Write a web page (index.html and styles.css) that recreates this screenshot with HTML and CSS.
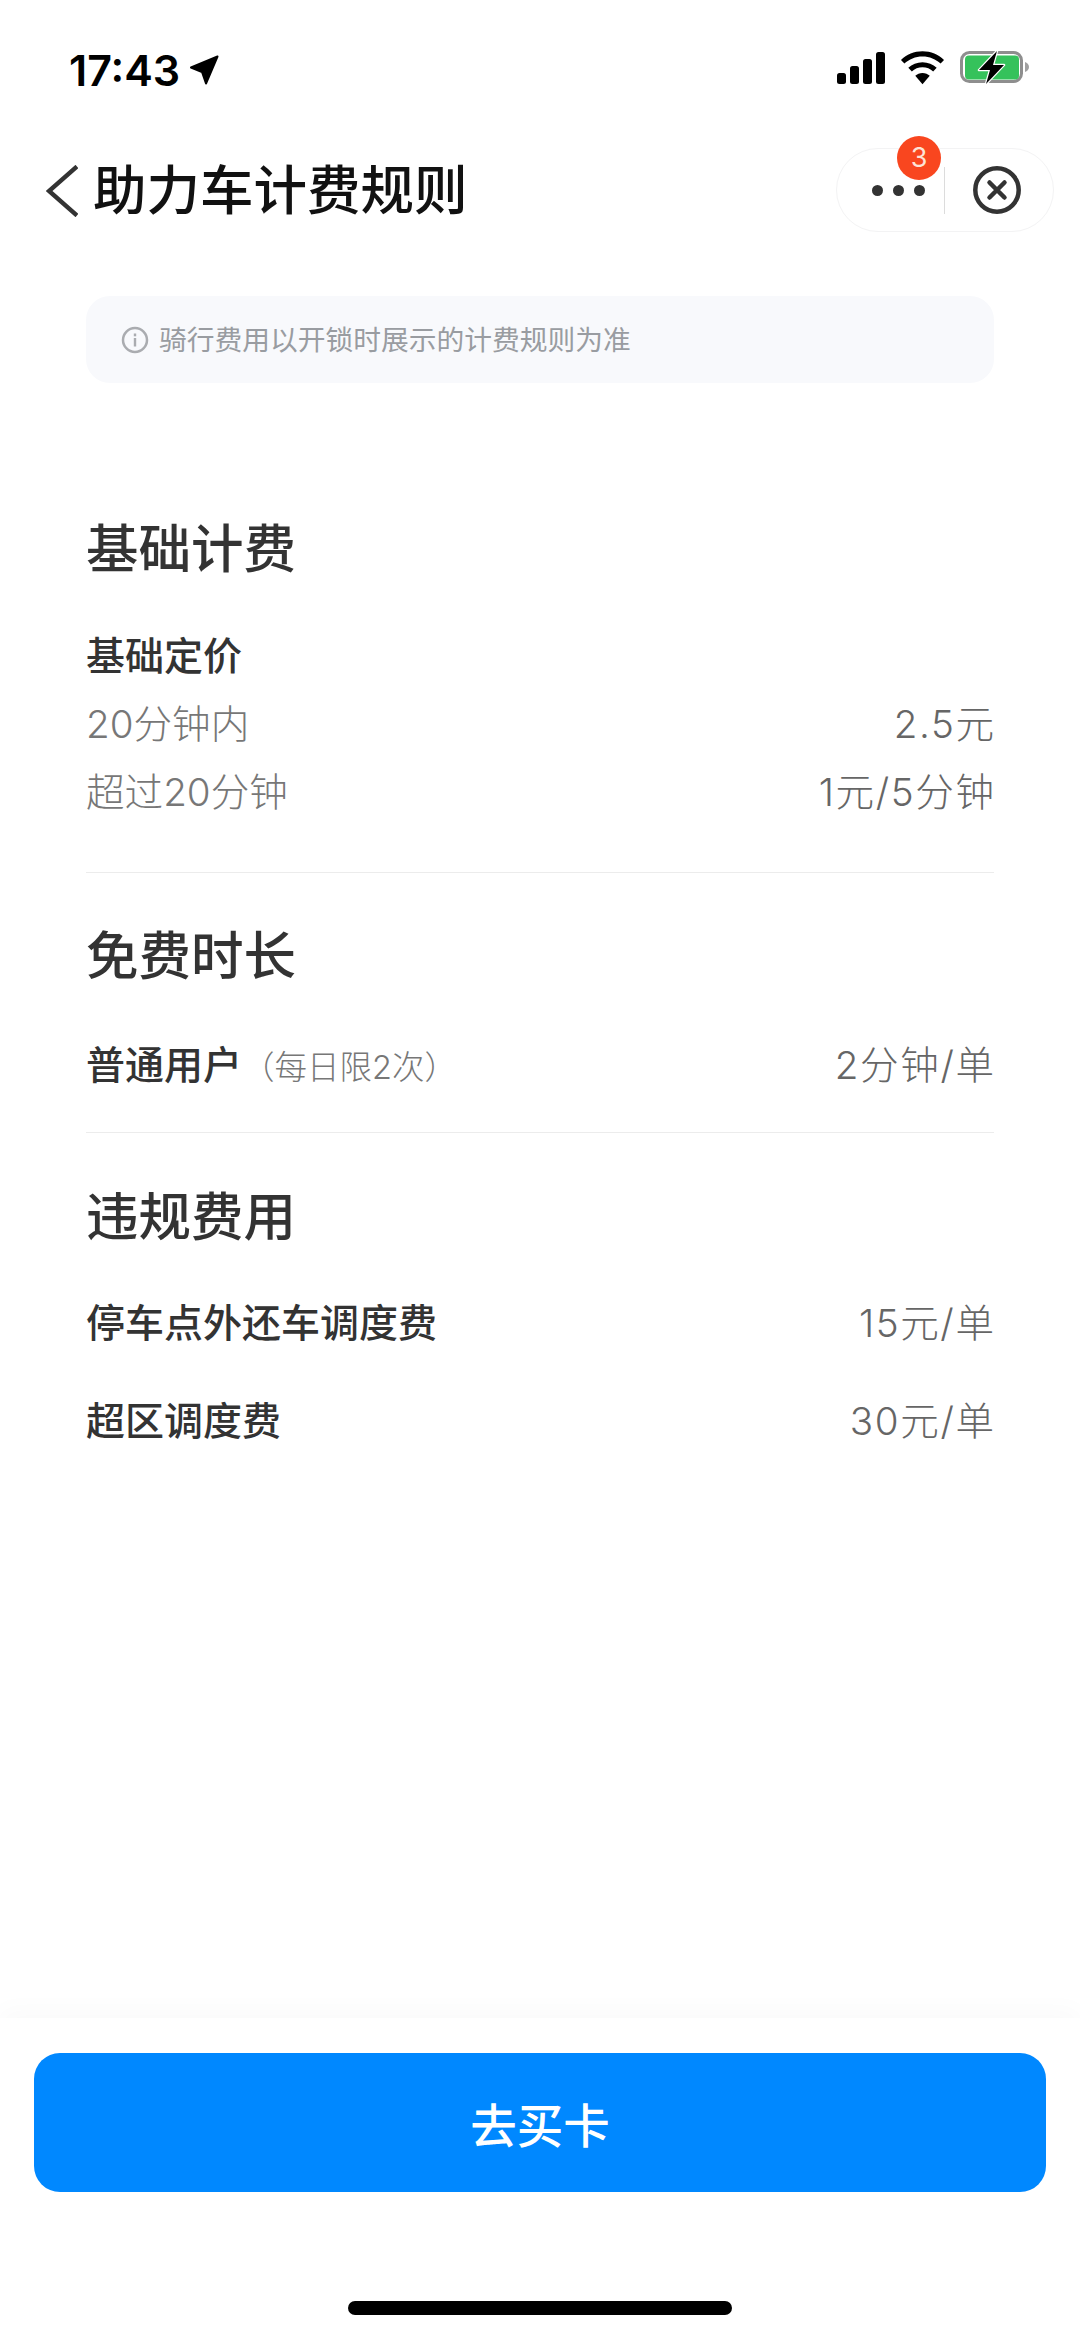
FILE: index.html
```html
<!DOCTYPE html>
<html lang="zh-CN">
<head>
<meta charset="utf-8">
<title>助力车计费规则</title>
<link rel="stylesheet" href="styles.css">
</head>
<body>
<div class="page">
  <div class="status">
    <div class="status-left">
      <span class="time">17:43</span>
      <svg class="loc" width="30" height="30" viewBox="0 0 30 30"><path d="M28.500 1.500 2 12.500 13 17 17 28.500Z" fill="#000" stroke="#000" stroke-width="2" stroke-linejoin="round"/></svg>
    </div>
    <div class="status-right">
      <svg width="48" height="32" viewBox="0 0 48 32"><rect x="0" y="21" width="9" height="11" rx="2.500"/><rect x="13" y="14" width="9" height="18" rx="2.500"/><rect x="26" y="7" width="9" height="25" rx="2.500"/><rect x="39" y="0" width="9" height="32" rx="2.500"/></svg>
      <svg width="45" height="34" viewBox="0 0 46 34"><path d="M23 0C14.500 0 6.700 3.300 1 8.700l3.500 3.800C9.300 7.900 15.800 5.200 23 5.200s13.700 2.700 18.500 7.300L45 8.700C39.300 3.300 31.500 0 23 0Z"/><path d="M23 11c-5.600 0-10.700 2.200-14.500 5.700l3.600 3.800c2.800-2.700 6.700-4.300 10.900-4.300s8.100 1.600 10.900 4.300l3.600-3.800C33.700 13.200 28.600 11 23 11Z"/><path d="M23 22c-2.900 0-5.500 1.100-7.400 3L23 33.500 30.400 25c-1.900-1.900-4.500-3-7.400-3Z"/></svg>
      <svg width="69" height="34" viewBox="0 0 69 34"><rect x="1.500" y="1.500" width="60" height="29" rx="8" fill="none" stroke="#8e8e8e" stroke-width="3"/><rect x="5" y="4.500" width="54" height="24" rx="4" fill="#35c25b"/><path d="M65 11v10c2-.5 4-2.700 4-5s-2-4.500-4-5Z" fill="#a0a0a0"/><path d="M37 0 19 19H30L26 33 44 14H33L37 0Z" fill="#000" stroke="#fff" stroke-width="2.500" stroke-linejoin="round" paint-order="stroke"/></svg>
    </div>
  </div>

  <div class="nav">
    <svg class="back" width="32" height="52" viewBox="0 0 32 52"><path d="M31 1.500 3 26l28 24.500" fill="none" stroke="#333" stroke-width="4.500"/></svg>
    <h1 class="nav-title">助力车计费规则</h1>
    <div class="capsule">
      <div class="more">
        <span class="dot"></span><span class="dot"></span><span class="dot"></span>
        <span class="badge">3</span>
      </div>
      <span class="cap-line"></span>
      <div class="close">
        <svg width="48" height="48" viewBox="0 0 48 48"><circle cx="24" cy="24" r="21.700" fill="none" stroke="#333" stroke-width="4.500"/><path d="M16.500 16.500l15 15M31.500 16.500l-15 15" fill="none" stroke="#333" stroke-width="4.500" stroke-linecap="round"/></svg>
      </div>
    </div>
  </div>

  <main class="main">
    <div class="notice">
      <svg width="28" height="28" viewBox="0 0 28 28"><circle cx="14" cy="14" r="12" fill="none" stroke="#aaacb0" stroke-width="2.500"/><rect x="12.800" y="7.500" width="2.400" height="2.800" fill="#aaacb0"/><rect x="12.800" y="12" width="2.400" height="8.500" fill="#aaacb0"/></svg>
      <span>骑行费用以开锁时展示的计费规则为准</span>
    </div>

    <section class="section first">
      <h2 class="heading">基础计费</h2>
      <div class="row gap-a"><span class="label">基础定价</span></div>
      <div class="row"><span class="muted">20分钟内</span><span class="value">2.5元</span></div>
      <div class="row"><span class="muted">超过20分钟</span><span class="value">1元/5分钟</span></div>
    </section>
    <hr class="rule rule-a">

    <section class="section">
      <h2 class="heading">免费时长</h2>
      <div class="row gap-b"><span class="label">普通用户<span class="note">（每日限2次）</span></span><span class="value">2分钟/单</span></div>
    </section>
    <hr class="rule rule-b">

    <section class="section">
      <h2 class="heading">违规费用</h2>
      <div class="row gap-c"><span class="label">停车点外还车调度费</span><span class="value">15元/单</span></div>
      <div class="row gap-d"><span class="label">超区调度费</span><span class="value">30元/单</span></div>
    </section>
  </main>

  <footer class="footer">
    <button class="buy">去买卡</button>
    <div class="home"></div>
  </footer>
</div>
</body>
</html>
```

FILE: styles.css
```css
* { box-sizing: border-box; }
html, body { margin: 0; padding: 0; background: #fff; }
body { font-family: "Inter", "Noto Sans CJK SC", sans-serif; }
.page { width: 1080px; height: 2337px; display: flex; flex-direction: column; overflow: hidden; }

.status { height: 140px; display: flex; justify-content: space-between; align-items: center; padding: 0 51px 0 69px; }
.status-left { display: flex; align-items: center; gap: 9px; }
.time { font-size: 43px; font-weight: 600; color: #000; line-height: 50px; }
.status-right { display: flex; align-items: center; gap: 15px; padding-bottom: 4px; }
.status-right svg { display: block; fill: #000; }

.nav { height: 100px; display: flex; align-items: center; padding: 0 26px 0 46px; }
.back { display: block; flex: none; margin-top: 2px; }
.nav-title { margin: 0 0 0 15px; padding-top: 2px; font-size: 53.500px; font-weight: 500; line-height: 70px; color: #111; flex: 1; }
.capsule { width: 218px; height: 84px; border: 1px solid #f3f3f4; border-radius: 42px; display: flex; align-items: center; background: #fff; }
.more { position: relative; width: 107px; height: 100%; display: flex; align-items: center; justify-content: flex-end; gap: 10px; padding-right: 19px; }
.dot { width: 11px; height: 11px; border-radius: 50%; background: #333; }
.badge { position: absolute; left: 60px; top: -13px; width: 44px; height: 44px; border-radius: 50%; background: #f9461f; color: #fde3d6; font-size: 27px; line-height: 44px; text-align: center; }
.cap-line { width: 1px; height: 47px; background: #dcdcdc; }
.close { flex: 1; display: flex; align-items: center; justify-content: center; padding-right: 5px; }
.close svg { display: block; }

.main { flex: 1; padding: 56px 86px 0; }
.notice { height: 87px; border-radius: 24px; background: #f8f9fc; display: flex; align-items: center; gap: 10px; padding: 0 34px 3px 35px; color: #999ca1; font-size: 27.750px; }
.notice svg { flex: none; display: block; margin-top: 3px; }

.section.first { margin-top: 130px; }
.heading { margin: 0; padding-top: 1px; font-size: 52.500px; line-height: 70px; height: 70px; font-weight: 500; color: #333; }
.row { display: flex; justify-content: space-between; align-items: center; height: 68px; padding-bottom: 7px; font-size: 38.600px; }
.gap-a { margin-top: 39px; }
.gap-b { margin-top: 41px; }
.gap-c { margin-top: 38px; }
.gap-d { margin-top: 30px; }
.label { color: #333; font-weight: 500; font-size: 39px; }
.muted { color: #777; font-weight: 300; }
.value { color: #666; font-weight: 300; font-size: 38.600px; letter-spacing: 1.600px; margin-right: -1.600px; }
.note { color: #777; font-weight: 300; font-size: 32.500px; }
.rule { margin: 0; border: 0; height: 1px; background: #ececec; }
.rule-a { margin-top: 46px; margin-bottom: 47px; }
.rule-b { margin-top: 33px; margin-bottom: 48px; }

.footer { height: 319px; padding: 35px 34px 0; background: #fff; box-shadow: 0 -8px 24px rgba(0, 0, 0, 0.025); display: flex; flex-direction: column; align-items: center; }
.buy { display: block; width: 1012px; height: 139px; border: 0; border-radius: 26px; background: #0088ff; color: #fff; font-family: inherit; font-size: 46.500px; font-weight: 500; }
.home { width: 384px; height: 14px; margin-top: 109px; border-radius: 7px; background: #000; }
```
